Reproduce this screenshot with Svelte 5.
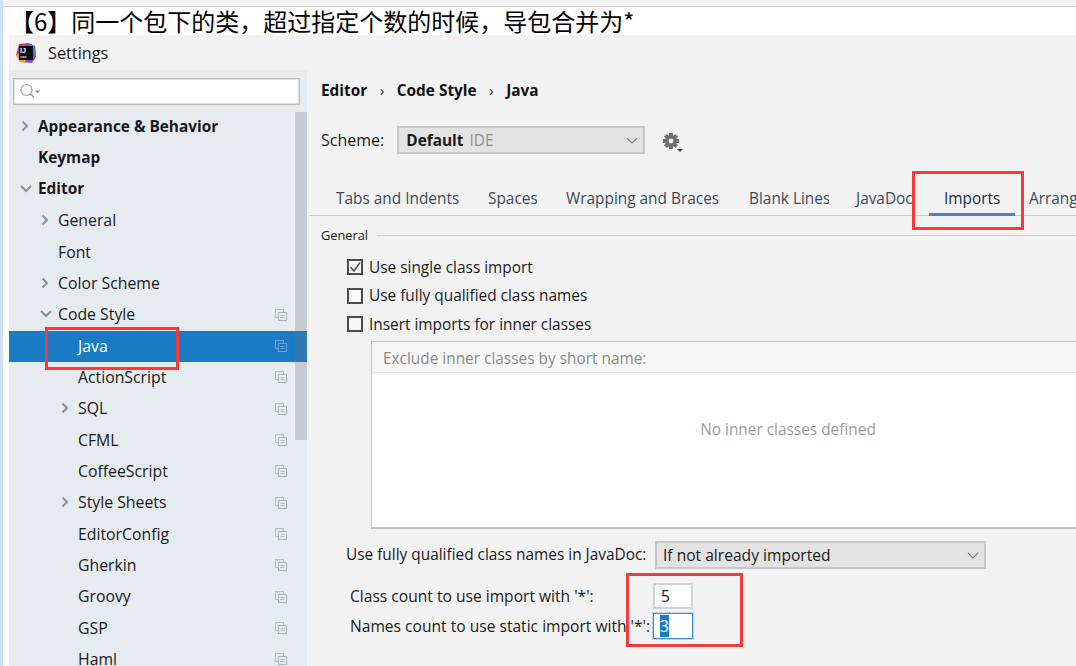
<script lang="ts">
    const tree = [
        { label: 'Appearance & Behavior', depth: 0, arrow: 'right', bold: true },
        { label: 'Keymap', depth: 0, bold: true },
        { label: 'Editor', depth: 0, arrow: 'down', bold: true },
        { label: 'General', depth: 1, arrow: 'right' },
        { label: 'Font', depth: 1 },
        { label: 'Color Scheme', depth: 1, arrow: 'right' },
        { label: 'Code Style', depth: 1, arrow: 'down', copy: true },
        { label: 'Java', depth: 2, copy: true, selected: true },
        { label: 'ActionScript', depth: 2, copy: true },
        { label: 'SQL', depth: 2, arrow: 'right', copy: true },
        { label: 'CFML', depth: 2, copy: true },
        { label: 'CoffeeScript', depth: 2, copy: true },
        { label: 'Style Sheets', depth: 2, arrow: 'right', copy: true },
        { label: 'EditorConfig', depth: 2, copy: true },
        { label: 'Gherkin', depth: 2, copy: true },
        { label: 'Groovy', depth: 2, copy: true },
        { label: 'GSP', depth: 2, copy: true },
        { label: 'Haml', depth: 2, copy: true }
    ];

    const tabs = [
        { label: 'Tabs and Indents', width: 152 },
        { label: 'Spaces', width: 76, clip: true },
        { label: 'Wrapping and Braces', width: 183 },
        { label: 'Blank Lines', width: 107 },
        { label: 'JavaDoc', width: 86 },
        { label: 'Imports', width: 86, active: true },
        { label: 'Arrangement', width: 120 }
    ];

    const options = [
        { label: 'Use single class import', checked: true },
        { label: 'Use fully qualified class names', checked: false },
        { label: 'Insert imports for inner classes', checked: false }
    ];
</script>

<div class="page">
    <div class="top-strip"></div>
    <h1 class="note">【6】同一个包下的类，超过指定个数的时候，导包合并为*</h1>

    <div class="dialog">
        <div class="titlebar">
            <svg class="logo" width="20" height="20" viewBox="0 0 20 20">
                <defs>
                    <linearGradient id="lg" x1="0" y1="0" x2="1" y2="1">
                        <stop offset="0" stop-color="#f0325e" />
                        <stop offset="0.55" stop-color="#c42d9c" />
                        <stop offset="1" stop-color="#3c6cf0" />
                    </linearGradient>
                </defs>
                <path d="M3 1 L12 0 L19 3 L20 14 L16 20 L4 19 L0 12 Z" fill="url(#lg)" />
                <path d="M12 0 L19 3 L20 12 L14 8 Z" fill="#3f7cf5" />
                <path d="M0 12 L4 19 L10 20 L6 9 Z" fill="#f5a03c" />
                <rect x="3" y="3" width="14" height="14" fill="#0b0b0e" />
                <text x="4" y="10" font-size="7" font-weight="700" fill="#fff" font-family="Liberation Sans, sans-serif">IJ</text>
                <rect x="4.5" y="13.5" width="6" height="1" fill="#fff" />
            </svg>
            <span class="title">Settings</span>
        </div>

        <div class="body">
            <aside class="sidebar">
                <div class="search">
                    <svg width="24" height="17" viewBox="0 0 24 17">
                        <circle cx="7.5" cy="7" r="5.5" fill="none" stroke="#a0a0a0" stroke-width="1.2" />
                        <path d="M11.5 11 L15 14.5" stroke="#9a9a9a" stroke-width="1.6" />
                        <path d="M16 7.5 h5 l-2.5 3 z" fill="#8c8c8c" />
                    </svg>
                </div>
                <div class="tree">
                    {#each tree as item}
                        <div class="row" class:selected={item.selected}>
                            <span class="arrow-slot" style="margin-left: {item.depth * 20}px">
                                {#if item.arrow === 'right'}
                                    <svg width="10" height="12" viewBox="0 0 10 12"><path d="M2.5 1.5 L7 6 L2.5 10.5" fill="none" stroke="#8f8f8f" stroke-width="2" /></svg>
                                {:else if item.arrow === 'down'}
                                    <svg width="12" height="10" viewBox="0 0 12 10"><path d="M1 2 L6 7 L11 2" fill="none" stroke="#8f8f8f" stroke-width="2" /></svg>
                                {/if}
                            </span>
                            <span class="label" class:bold={item.bold}>{item.label}</span>
                            {#if item.copy}
                                <svg class="copy" width="12" height="12" viewBox="0 0 12 12">
                                    <rect x="0.5" y="0.5" width="8" height="8" fill="none" stroke={item.selected ? '#6ba2cf' : '#b4bcc4'} />
                                    <rect x="3.5" y="3.5" width="8" height="8" fill={item.selected ? '#1b7ac4' : '#e6ebf0'} stroke={item.selected ? '#6ba2cf' : '#abb4bc'} />
                                    <path d="M5.5 6.5 h4 M5.5 8.5 h4" stroke={item.selected ? '#6ba2cf' : '#b4bcc4'} />
                                </svg>
                            {/if}
                        </div>
                    {/each}
                </div>
                <div class="scrollbar"></div>
            </aside>

            <main class="content">
                <div class="crumbs">
                    <b>Editor</b><span class="sep">›</span><b>Code Style</b><span class="sep">›</span><b>Java</b>
                </div>

                <div class="scheme">
                    <span class="scheme-label">Scheme:</span>
                    <div class="combo scheme-combo">
                        <b>Default</b><span class="ide">IDE</span>
                        <svg class="chevron" width="12" height="7" viewBox="0 0 12 7"><path d="M1 1 L6 6 L11 1" fill="none" stroke="#7d7d7d" stroke-width="1.1" /></svg>
                    </div>
                    <svg class="gear" width="22" height="22" viewBox="0 0 22 22">
                        <g fill="#707070" transform="translate(9 9)">
                            <rect x="-2" y="-8" width="4" height="16" />
                            <rect x="-2" y="-8" width="4" height="16" transform="rotate(45)" />
                            <rect x="-2" y="-8" width="4" height="16" transform="rotate(90)" />
                            <rect x="-2" y="-8" width="4" height="16" transform="rotate(135)" />
                            <circle r="6" />
                            <circle r="2.4" fill="#f2f2f2" />
                        </g>
                        <path fill="#444" d="M15 17 h6 l-3 3 z" />
                    </svg>
                </div>

                <div class="tabs">
                    {#each tabs as tab}
                        <div class="tab" class:active={tab.active} class:clip={tab.clip} style="width: {tab.width}px">{tab.label}</div>
                    {/each}
                </div>

                <div class="general">
                    <div class="group-title"><span>General</span><i></i></div>
                    <div class="options">
                        {#each options as opt}
                            <div class="check-row">
                                <span class="box">
                                    {#if opt.checked}
                                        <svg width="12" height="12" viewBox="0 0 12 12"><path d="M1.5 6 L5 10 L11 1.5" fill="none" stroke="#4a4a4a" stroke-width="1.4" /></svg>
                                    {/if}
                                </span>
                                <span>{opt.label}</span>
                            </div>
                        {/each}
                    </div>

                    <div class="exclude">
                        <div class="exclude-head">Exclude inner classes by short name:</div>
                        <div class="exclude-empty">No inner classes defined</div>
                    </div>

                    <div class="javadoc">
                        <span class="javadoc-label">Use fully qualified class names in JavaDoc:</span>
                        <div class="combo javadoc-combo">
                            If not already imported
                            <svg class="chevron" width="12" height="7" viewBox="0 0 12 7"><path d="M1 1 L6 6 L11 1" fill="none" stroke="#7d7d7d" stroke-width="1.1" /></svg>
                        </div>
                    </div>

                    <div class="counts">
                        <div class="count-row">
                            <span class="count-label">Class count to use import with '*':</span>
                            <div class="field">5</div>
                        </div>
                        <div class="count-row">
                            <span class="count-label">Names count to use static import with '*':</span>
                            <div class="field focus"><span class="sel">3</span></div>
                        </div>
                    </div>
                </div>
            </main>
        </div>
    </div>

    <div class="mark mark-tab"></div>
    <div class="mark mark-java"></div>
    <div class="mark mark-count"></div>
</div>

<style>
    :global(body) {
        margin: 0;
        background: #fff;
    }

    .page {
        position: relative;
        width: 1076px;
        height: 666px;
        overflow: hidden;
        box-sizing: border-box;
        border-left: 3px solid #cfe0fb;
        background: #fff;
        font-family: "Open Sans", "Noto Sans", sans-serif;
        font-size: 15.4px;
        color: #1a1a1a;
    }

    .top-strip {
        height: 6px;
        background: #f4f4f4;
        border-bottom: 1px solid #cfcfcf;
    }

    .note {
        margin: 0 0 0 7px;
        height: 28px;
        font-family: "Noto Sans CJK SC", sans-serif;
        font-size: 24px;
        font-weight: 400;
        line-height: 27px;
        color: #000;
        white-space: nowrap;
    }

    .dialog {
        margin-left: 6px;
        height: 631px;
        background: #f2f2f2;
    }

    .titlebar {
        height: 35px;
        display: flex;
        align-items: center;
        gap: 12px;
        padding-left: 7px;
    }

    .title {
        font-size: 16.3px;
    }

    .body {
        display: flex;
        height: 596px;
    }

    .sidebar {
        position: relative;
        width: 298px;
        flex: none;
        background: #e6ebf0;
    }

    .search {
        margin: 8px 0 0 4px;
        width: 287px;
        height: 27px;
        box-sizing: border-box;
        background: #fff;
        border: 1px solid #bcbfc2;
        box-shadow: inset 0 0 0 1px #dfe1e3;
        display: flex;
        align-items: center;
        padding-left: 5px;
    }

    .tree {
        margin-top: 6.5px;
    }

    .row {
        position: relative;
        height: 31.35px;
        display: flex;
        align-items: center;
        padding-bottom: 2px;
        box-sizing: border-box;
        font-size: 15.8px;
    }

    .row.selected {
        background: #1b7ac4;
        color: #fff;
    }

    .arrow-slot {
        width: 29px;
        flex: none;
        display: flex;
        justify-content: flex-start;
        padding-left: 11px;
        box-sizing: border-box;
    }

    .label {
        white-space: nowrap;
    }

    .bold {
        font-weight: 700;
        font-size: 15.4px;
    }

    .copy {
        position: absolute;
        left: 266px;
        top: 9px;
    }

    .scrollbar {
        position: absolute;
        left: 286px;
        top: 42px;
        width: 12px;
        height: 328px;
        background: rgba(110, 115, 125, 0.27);
    }

    .content {
        flex: 1;
        min-width: 0;
        padding-left: 2px;
    }

    .crumbs {
        margin: 11px 0 0 12px;
        height: 20px;
        line-height: 20px;
        display: flex;
        color: #111;
    }

    .sep {
        width: 29.5px;
        text-align: center;
        font-size: 14px;
    }

    .scheme {
        margin: 25px 0 0 12px;
        height: 28px;
        display: flex;
        align-items: center;
    }

    .scheme-label {
        font-size: 16px;
    }

    .combo {
        position: relative;
        box-sizing: border-box;
        background: #e3e3e3;
        border: 2px solid #c6c6c6;
        display: flex;
        align-items: center;
        white-space: nowrap;
    }

    .scheme-combo {
        margin-left: 13px;
        width: 248px;
        height: 28px;
        padding-left: 7px;
    }

    .ide {
        margin-left: 6px;
        color: #8e8e8e;
    }

    .chevron {
        position: absolute;
        right: 5px;
        top: 9px;
    }

    .gear {
        margin-left: 17px;
        margin-top: 5px;
    }

    .tabs {
        margin-top: 20px;
        height: 42px;
        display: flex;
        box-sizing: border-box;
        border-bottom: 1px solid #cbcbcb;
        width: 900px;
    }

    .tab {
        flex: none;
        box-sizing: border-box;
        padding: 15px 0 0 27px;
        white-space: nowrap;
        overflow: hidden;
        line-height: 20px;
        color: #3c4a58;
    }

    .tab.clip {
        margin-right: 2px;
    }

    .tab.active {
        color: #1a2a3a;
        margin-left: 14px;
        padding-left: 15px;
        border-bottom: 3px solid #4a80c4;
        height: 42px;
    }

    .tab:last-child {
        padding-left: 14px;
    }

    .general {
        padding-left: 12px;
    }

    .group-title {
        margin-top: 10px;
        display: flex;
        align-items: center;
        gap: 9px;
        font-size: 12.8px;
        height: 18px;
    }

    .group-title i {
        flex: 1;
        height: 1px;
        background: #cdcdcd;
    }

    .options {
        margin: 9px 0 0 26px;
    }

    .check-row {
        height: 28.5px;
        display: flex;
        align-items: center;
        gap: 6px;
    }

    .box {
        width: 16px;
        height: 16px;
        box-sizing: border-box;
        border: 2px solid #4c4c4c;
        background: #f7f7f7;
        display: flex;
        align-items: center;
        justify-content: center;
    }

    .exclude {
        margin: 2px 0 0 50px;
        width: 834px;
        height: 188px;
        box-sizing: border-box;
        background: #fff;
        border: 1px solid #c4c4c4;
        border-bottom-width: 2px;
        display: flex;
        flex-direction: column;
    }

    .exclude-head {
        height: 31px;
        line-height: 33px;
        box-sizing: border-box;
        padding-left: 11px;
        color: #8a8a8a;
        background: #f7f7f7;
        border-bottom: 1px solid #e4e4e4;
    }

    .exclude-empty {
        flex: 1;
        display: flex;
        align-items: center;
        justify-content: center;
        padding-bottom: 40px;
        color: #9c9c9c;
    }

    .javadoc {
        margin: 12px 0 0 25px;
        height: 28px;
        display: flex;
        align-items: center;
    }

    .javadoc-label {
        width: 309px;
        flex: none;
        white-space: nowrap;
    }

    .javadoc-combo {
        width: 331px;
        height: 28px;
        padding-left: 6px;
        font-size: 15.6px;
    }

    .counts {
        margin: 14px 0 0 29px;
        font-size: 15.6px;
    }

    .count-row {
        display: flex;
        align-items: center;
        height: 26px;
        margin-bottom: 4px;
    }

    .count-label {
        width: 303px;
        flex: none;
        white-space: nowrap;
    }

    .field {
        width: 40px;
        height: 26px;
        box-sizing: border-box;
        background: #fff;
        border: 2px solid #d2d2d2;
        padding-left: 6px;
        line-height: 22px;
    }

    .field.focus {
        border: 1px solid #3f8fd6;
        box-shadow: 0 0 0 1px #b5d6f2;
        line-height: 24px;
    }

    .sel {
        display: inline-block;
        background: #1b7ac4;
        color: #fff;
        line-height: 22px;
        width: 9px;
    }

    .mark {
        position: absolute;
        box-sizing: border-box;
        border: 3px solid #f33b3b;
    }

    .mark-tab {
        left: 909px;
        top: 171px;
        width: 112px;
        height: 59px;
    }

    .mark-java {
        left: 42px;
        top: 327px;
        width: 134px;
        height: 43px;
    }

    .mark-count {
        left: 623px;
        top: 573px;
        width: 117px;
        height: 74px;
    }
</style>
